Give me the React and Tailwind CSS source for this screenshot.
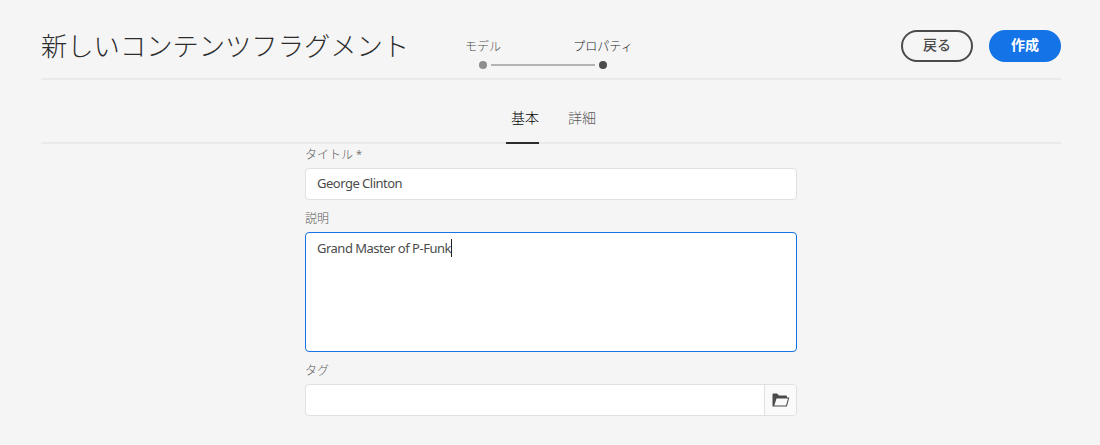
function Step({ label, active, className }) {
  return (
    <div className={`flex flex-col items-center ${className}`}>
      <span className={`h-[18px] whitespace-nowrap text-[12px] leading-[18px] font-light ${active ? "text-[#222222]" : "text-[#4b4b4b]"}`}>
        {label}
      </span>
      <span className={`mt-[6px] size-2 rounded-full ${active ? "bg-[#4b4b4b]" : "bg-[#8e8e8e]"}`} />
    </div>
  );
}

function Label({ children, required }) {
  return (
    <label className="flex h-[22px] text-[12px] leading-4 font-light text-[#5a5a5a]">
      {children}
      {required && <span className="ml-[3px] font-['Open_Sans',sans-serif] text-[11px] font-normal text-[#6e6e6e]">*</span>}
    </label>
  );
}

function FolderIcon() {
  return (
    <svg width="18" height="14" viewBox="0 0 18 14">
      <path fill="#4b4b4b" fillRule="evenodd" d="M0.500 13.500V1.500a1 1 0 0 1 1-1H5L7 2.500H14a1 1 0 0 1 1 1V4.500H17.300L14.900 13.500ZM4.500 5.500L2.300 12.500H14L16 5.500Z" />
    </svg>
  );
}

export default function App() {
  return (
    <div className="h-[445px] w-[1100px] overflow-hidden bg-[#f5f5f5] px-[41px] font-['Noto_Sans_CJK_JP',sans-serif]" lang="ja">
      <header className="flex h-20 w-[1020px] border-b-2 border-[#eaeaea]">
        <h1 className="w-[382px] pt-[25px] text-[26.3px] leading-10 font-light whitespace-nowrap text-[#2c2c2c]">
          新しいコンテンツフラグメント
        </h1>
        <div className="flex pt-[37px]">
          <Step label="モデル" className="w-[120px]" />
          <Step label="プロパティ" active className="w-[120px]" />
        </div>
        <div className="-ml-[172px] mt-[64px] h-[2px] w-[104px] bg-[#b3b3b3]" />
        <div className="ml-auto flex gap-4 pt-[30px]">
          <button className="flex h-8 w-[72px] items-center justify-center rounded-full border-2 border-[#4b4b4b] pb-1 text-[14px] leading-5 font-medium text-[#4b4b4b]">戻る</button>
          <button className="flex h-8 w-[72px] items-center justify-center rounded-full bg-[#1473e6] pb-1 text-[14px] leading-5 font-bold text-white">作成</button>
        </div>
      </header>
      <nav className="flex h-16 w-[1020px] justify-start gap-6 border-b-2 border-[#eaeaea] pl-[465px] text-[14px]">
        <div className="-mb-[2px] w-[33px] border-b-2 border-[#2c2c2c] pt-[27px] pl-[5px] leading-5 font-light whitespace-nowrap text-black">基本</div>
        <div className="pt-[27px] pl-[5px] leading-5 font-light text-[#5a5a5a]">詳細</div>
      </nav>
      <form className="ml-[264px] w-[492px] pt-[2px]">
        <Label required>タイトル</Label>
        <div className="h-8 rounded border border-[#e1e1e1] bg-white pl-[11px] font-['Noto_Sans',sans-serif] text-[13px] leading-[29px] tracking-[-0.5px] text-[#4b4b4b]">
          George Clinton
        </div>
        <div className="h-[10px]" />
        <Label>説明</Label>
        <div className="flex h-[120px] rounded border border-[#1473e6] bg-white pt-[5px] pl-[11px] font-['Noto_Sans',sans-serif] text-[13px] leading-5 tracking-[-0.5px] text-[#4b4b4b]">
          <span>Grand Master of P-Funk</span>
          <span className="mt-px h-[18px] w-px bg-[#222]" />
        </div>
        <div className="h-[10px]" />
        <Label>タグ</Label>
        <div className="flex h-8 overflow-hidden rounded border border-[#e1e1e1] bg-white">
          <div className="flex-1" />
          <div className="flex w-8 items-center justify-center border-l border-[#e1e1e1] bg-[#fafafa]">
            <FolderIcon />
          </div>
        </div>
      </form>
    </div>
  );
}
